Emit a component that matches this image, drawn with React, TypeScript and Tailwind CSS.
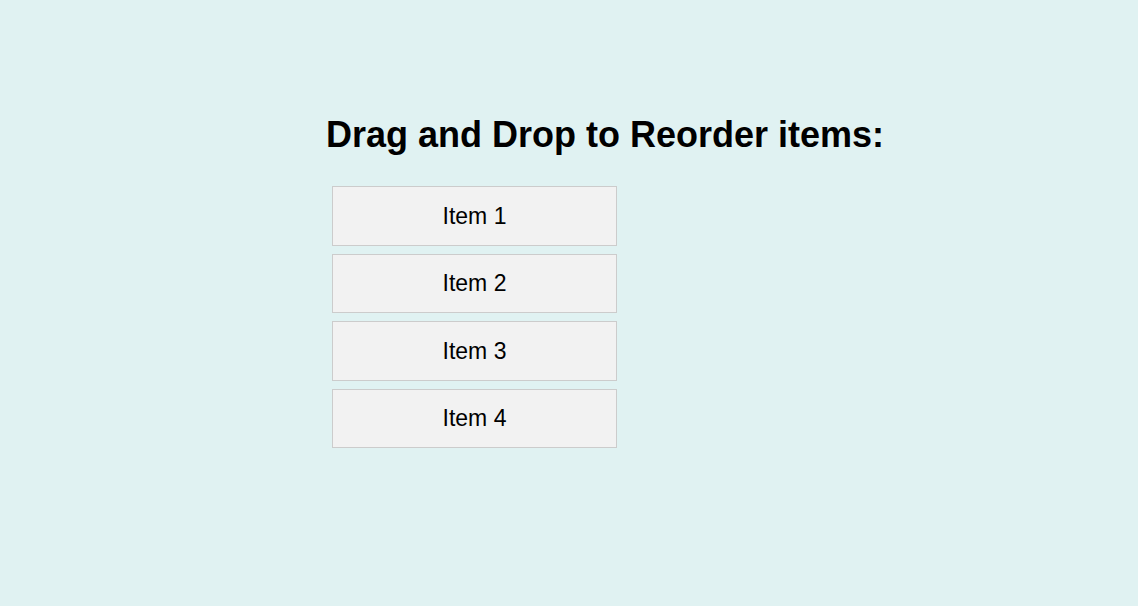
import { useState } from 'react'

const App = () => {
  const [items, setItems] = useState(['Item 1', 'Item 2', 'Item 3', 'Item 4'])
  const [dragIndex, setDragIndex] = useState<number | null>(null)

  // Move the dragged item to the drop target's slot
  const handleDrop = (index: number) => {
    if (dragIndex === null || dragIndex === index) return
    const next = [...items]
    const [moved] = next.splice(dragIndex, 1)
    next.splice(index, 0, moved)
    setItems(next)
    setDragIndex(null)
  }

  return (
    <div className="min-h-screen bg-[#e0f2f2] font-['Liberation_Sans',Arial,sans-serif] text-black">
      <div className="flex flex-col pt-[114px] pl-[326px]">
        <h1 className="text-[36px] leading-[41px] font-bold">Drag and Drop to Reorder items:</h1>
        <ul className="mt-[31px] ml-[6px] flex w-[285px] flex-col gap-2">
          {items.map((item, index) => (
            <li
              key={item}
              draggable
              onDragStart={() => setDragIndex(index)}
              onDragOver={(e) => e.preventDefault()}
              onDrop={() => handleDrop(index)}
              className="h-[59.5px] flex items-center justify-center border border-[#cccccc] bg-[#f2f2f2] text-[23px] cursor-move"
            >
              {item}
            </li>
          ))}
        </ul>
      </div>
    </div>
  )
}

export default App
